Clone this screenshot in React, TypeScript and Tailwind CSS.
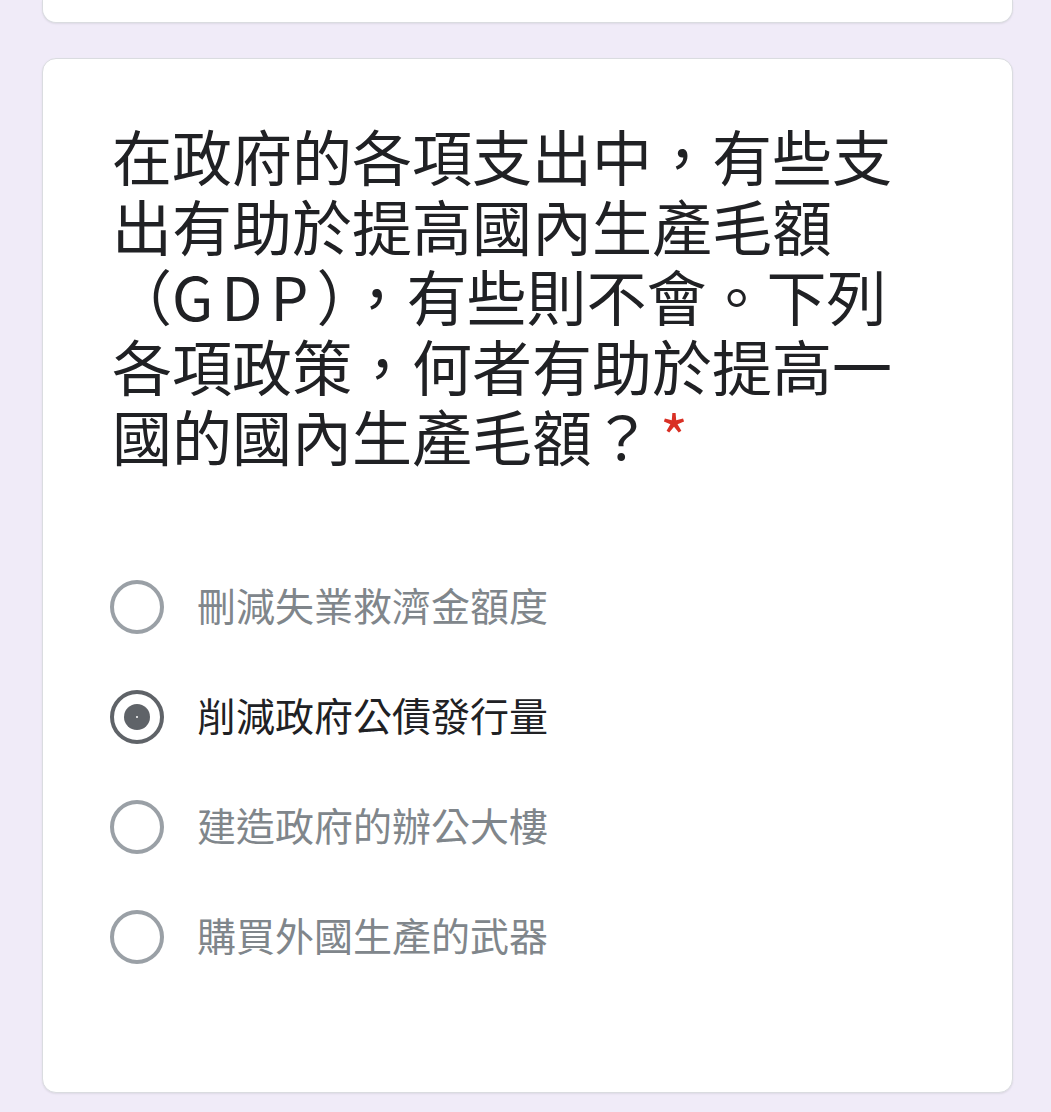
const options = [
  { label: '刪減失業救濟金額度', checked: false },
  { label: '削減政府公債發行量', checked: true },
  { label: '建造政府的辦公大樓', checked: false },
  { label: '購買外國生產的武器', checked: false },
];

function Radio({ checked }: { checked: boolean }) {
  return (
    <div
      className={
        checked
          ? '-ml-[2px] flex h-[54px] w-[54px] shrink-0 items-center justify-center rounded-full border-[4px] border-[#5f6368]'
          : '-ml-[2px] h-[54px] w-[54px] shrink-0 rounded-full border-[4px] border-[#9aa0a6]'
      }
    >
      {checked && (
        <div className="flex h-[26px] w-[26px] items-center justify-center rounded-full bg-[#5f6368]">
          <div className="h-[2px] w-[2px] rounded-full bg-white" />
        </div>
      )}
    </div>
  );
}

export default function App() {
  return (
    <div
      className="min-h-[1112px] bg-[#f0ebf8] pl-[42px] pr-[38px]"
      style={{ fontFamily: '"Noto Sans CJK TC", "Noto Sans", sans-serif' }}
    >
      {/* previous card, cut off at top */}
      <div className="h-[23px] rounded-b-[14px] border-x border-b border-[#dadce0] bg-white shadow-[0_1px_2px_rgba(0,0,0,0.08)]" />

      {/* question card */}
      <div className="mt-[35px] h-[1035px] rounded-[14px] border border-[#dadce0] bg-white px-[69px] pt-[61px] shadow-[0_1px_2px_rgba(0,0,0,0.08)]">
        <div className="text-[60px] leading-[70px] text-[#202124]">
          在政府的各項支出中，有些支出有助於提高國內生產毛額（
          <span className="tracking-[8px]">GDP</span>
          ），有些則不會。下列各項政策，何者有助於提高一國的國內生產毛額？
          <span className="ml-[8px] text-[#d93025]">*</span>
        </div>

        <div className="mt-[82px] flex flex-col">
          {options.map((o) => (
            <div key={o.label} className="flex h-[110px] items-center gap-[33px]">
              <Radio checked={o.checked} />
              <span
                className={
                  o.checked
                    ? 'pb-[5px] text-[39px] leading-none text-[#202124]'
                    : 'pb-[5px] text-[39px] leading-none text-[#80868b]'
                }
              >
                {o.label}
              </span>
            </div>
          ))}
        </div>
      </div>
    </div>
  );
}
